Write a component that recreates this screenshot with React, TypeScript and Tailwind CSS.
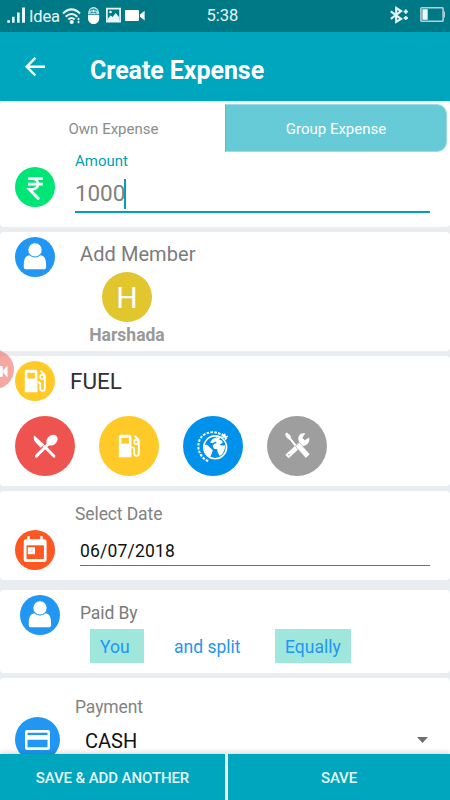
import type { ReactNode } from "react";

function StatusBar() {
  return (
    <div className="flex h-8 flex-shrink-0 items-center bg-[#007987] text-[#e8f6f7]">
      <svg className="ml-[7px] w-[19px]" height="32" viewBox="0 0 19 32" fill="currentColor">
        <path d="M0.3 20.2h2.7v2.6H.3zM5 16.7h2.6v6H5zM10 12.4h2.7v10.3H10zM15 7.4h3v15.3h-3z" />
      </svg>
      <span className="ml-[3px] w-[31px] pt-px text-[16.5px] leading-8 tracking-[-0.2px]">Idea</span>
      {/* Wifi */}
      <svg className="ml-0.5 w-[20px]" height="32" viewBox="0 0 20 32" fill="none" stroke="currentColor">
        <path d="M1 13.4Q9.5 5.2 18 13.4M3.7 16.8Q9.5 11.2 15.3 16.8M6.3 19.6Q9.5 16.4 12.7 19.6" strokeWidth="2.1" />
        <circle cx="9.7" cy="22" r="2.1" fill="currentColor" stroke="none" />
        <path d="M16.5 17.8v2.4M15.3 19h2.4M16.5 20.8v2.4M15.3 22h2.4" strokeWidth="1.1" />
      </svg>
      {/* Mouse */}
      <svg className="ml-[5px] w-[13px]" height="32" viewBox="0 0 13 32">
        <path d="M1 14.8h11.2v3.2c0 8-11.2 8-11.2 0z" fill="#fff" />
        <path d="M1 14c0-9.5 11.2-9.5 11.2 0z" fill="currentColor" opacity="0.8" />
        <path d="M3 10.4q3.4-3 7 0M3.4 13q3-2 6 0" stroke="#007987" strokeWidth="0.9" fill="none" />
        <circle cx="6.5" cy="11" r="1.5" fill="#fff" stroke="#007987" strokeWidth="0.5" />
      </svg>
      {/* Picture */}
      <svg className="ml-[6px] w-[15px]" height="32" viewBox="0 0 15 32">
        <path d="M.9 8.7h13.2v13H.9z" fill="#007987" stroke="currentColor" strokeWidth="1.7" />
        <circle cx="4.5" cy="12" r="1.3" fill="currentColor" />
        <path d="M2 18.5l2.6-3 2 1.6 3-4 3.4 3.9V21H2z" fill="currentColor" />
      </svg>
      {/* Video */}
      <svg className="ml-1 w-[20px]" height="32" viewBox="0 0 20 32" fill="#fff">
        <rect x="0" y="10" width="14" height="11" rx="1" />
        <path d="M15 14.6l4.6-3.8v9.6L15 16.7z" />
      </svg>
      <span className="ml-[61px] w-[33px] text-center text-[16.5px] leading-8">5:38</span>
      {/* Bluetooth */}
      <svg className="ml-[151px] w-[19px]" height="32" viewBox="0 0 19 32" fill="none" stroke="currentColor" strokeWidth="2.1">
        <path d="M.8 11.4l10.3 7.5-4.9 3V8l4.9 3.1L.8 18.9" />
        <path d="M15.8 9.6v4.2M13.7 11.7h4.2M15.8 15.9v4.2M13.7 18h4.2" strokeWidth="1.8" />
      </svg>
      {/* Battery */}
      <svg className="ml-[11px] w-[26px]" height="32" viewBox="0 0 26 32">
        <rect x=".9" y="7.7" width="22.2" height="13.6" rx=".8" fill="none" stroke="#b5cfd2" strokeWidth="1.6" />
        <rect x="2.4" y="9.2" width="5.3" height="10.6" fill="#eef7f8" />
        <path d="M23.8 11.5h1.2v6h-1.2z" fill="#b5cfd2" />
      </svg>
    </div>
  );
}

function Card({ className, children }: { className: string; children?: ReactNode }) {
  return <section className={`flex-shrink-0 rounded bg-white ${className}`}>{children}</section>;
}

function Disc({ className, children }: { className: string; children: ReactNode }) {
  return <div className={`flex flex-shrink-0 items-center justify-center rounded-full ${className}`}>{children}</div>;
}

function PersonIcon() {
  return (
    <svg width="40" height="40" viewBox="0 0 40 40" fill="#fff">
      <path d="M14.2 18.2C10.2 19 8.8 22.6 8.8 27.6v2.6c0 1.2 1 2.1 2.2 2.1h18c1.2 0 2.1-.9 2.1-2.1v-2.6c0-5-1.4-8.6-5.3-9.4-3.6 2.6-8 2.6-11.6 0z" />
      <circle cx="20" cy="12.9" r="7.1" stroke="#2196f3" strokeWidth="0.9" />
    </svg>
  );
}

function FuelIcon({ size }: { size: number }) {
  return (
    <svg width={size} height={size} viewBox="0 0 24 24">
      <path d="M3.8 .8h8.6c1.1 0 2 .9 2 2v20.4H1.8V2.8c0-1.1.9-2 2-2z" fill="#fff" />
      <path d="M4.4 3.8h7.5v5.8H4.4z" fill="#ffca28" />
      <path
        d="M14.4 13.4h1.2c1.2 0 1.6.7 1.6 1.8v4.4c0 3.2 4.6 3 4.6 0V7.2c0-.9-.4-1.6-1-2.2l-3.4-3.3"
        fill="none"
        stroke="#fff"
        strokeWidth="1.9"
      />
      <circle cx="19.2" cy="8" r="2.1" fill="#ffca28" stroke="#fff" strokeWidth="1.8" />
    </svg>
  );
}

function FoodIcon() {
  return (
    <svg width="60" height="60" viewBox="0 0 60 60">
      <path d="M21.3 40.1L34 27.4M29.5 30.5l9.4 9.6" stroke="#fff" strokeWidth="2.9" strokeLinecap="round" />
      <path d="M19 19.2q-1.3 4.4 2.6 8.3l4.2 4.3 3.4-3.4z" fill="#fff" />
      <ellipse cx="37" cy="24.2" rx="6.2" ry="4.8" transform="rotate(-40 37 24.2)" fill="#fff" />
    </svg>
  );
}

function TravelIcon() {
  return (
    <svg width="60" height="60" viewBox="0 0 60 60">
      <circle cx="32.2" cy="31.3" r="11.4" fill="none" stroke="#fff" strokeWidth="1.6" />
      <path
        d="M25.2 45C13.4 40.6 12.2 23.6 21.6 18.3c6.2-3.3 13.3-2.7 19 1.7"
        fill="none"
        stroke="#fff"
        strokeWidth="2"
        strokeDasharray="2.6 1.3"
      />
      <path d="M38.4 21.2l6.4-.8M41.6 17.6l1 6.4M39 17.8l4.7 5" stroke="#fff" strokeWidth="1.5" />
      {/* Europe, Africa and the Americas */}
      <path
        d="M27 26.6l2.5-3.5 4.2-1.9 3.4.3-.8 2.2 3 1 .3 2.3-2.9 1.3 1.5 1.1 4 .2-.5 3.6-2.2 4.8-2.8 2-2.1-3.8-.4-3-3.2-.5-1.3-2.6 1.5-2.4 2.7-.8-1.8-1.4-2.4 1.7z"
        fill="#fff"
      />
      <path d="M21.2 28.6l3.3.4 2.6 2.7 2.7 2.5-1.2 3.6-1.3 3.3c-3.7-2-6.9-6.7-6.1-12.5z" fill="#fff" />
    </svg>
  );
}

function ToolsIcon() {
  return (
    <svg width="60" height="60" viewBox="0 0 60 60">
      <path d="M20 18.6l9 11.5" stroke="#fff" strokeWidth="2" />
      <path d="M18 18l1.8-1.4 3.7 2.9.6 3.5-1.4 1-3.1-2.6z" fill="#fff" />
      <path d="M20 40.6L35.8 26" stroke="#fff" strokeWidth="4.8" />
      <path
        d="M42.2 21.6l-4.4 2.6-2.6-2.5 3.1-4.2c-4.4-1.5-8.3 2.4-6.7 7l2.3 5c4 1.7 9.4-1.6 8.3-7.9z"
        fill="#fff"
      />
      <path d="M28.3 30.2l4.2-3.6L43 38.2l-4.2 4z" fill="#fff" stroke="#9e9e9e" strokeWidth="0.6" />
      <circle cx="22" cy="38.8" r=".8" fill="#9e9e9e" />
    </svg>
  );
}

export default function App() {
  return (
    <main className="relative flex h-[800px] w-[450px] flex-col overflow-hidden bg-[#e9edf0] font-['Roboto',sans-serif]">
      <StatusBar />

      <header className="flex h-[69px] flex-shrink-0 items-center bg-[#00a6bd]">
        <svg className="ml-[25px]" width="20" height="20" viewBox="0 0 20 20" fill="none" stroke="#fff" strokeWidth="2.4">
          <path d="M20 9.7H2M10.3 .9L1.7 9.7l8.6 8.8" />
        </svg>
        <h1 className="ml-[45px] pt-[8px] text-[25px] leading-8 font-bold tracking-[-0.07px] text-white">
          Create Expense
        </h1>
      </header>

      {/* Expense type and amount */}
      <Card className="mt-px h-[125px] pt-[2px]">
        <div className="flex h-12 text-[15px] leading-[49px]">
          <div className="w-[225px] pt-px pl-0.5 text-center text-[#8b8b8b]">Own Expense</div>
          <div className="w-[222px] rounded-r-[10px] border border-[#9bdbe4] border-l-[#4fc3d1] bg-[#66cad7] text-center text-white">
            Group Expense
          </div>
        </div>
        <div className="flex pl-[15px]">
          <Disc className="mt-[15px] size-10 bg-[#00e676]">
            <svg width="40" height="40" viewBox="0 0 40 40" fill="none" stroke="#fff" strokeWidth="2.8">
              <path d="M13 11.7h14.8M13 17.2h14.8M13 11.7h4.3c7.5 0 7.5 10.6 0 10.6H14.4l9.6 9.9" />
            </svg>
          </Disc>
          <div className="ml-5 w-[355px] border-b-2 border-[#00a0b7] text-[#00a0b7]">
            <div className="text-[15px] leading-[18px]">Amount</div>
            <div className="flex h-[41px] items-center text-[22.5px] text-[#808080]">
              <span className="pt-[7px] tracking-[-0.1px]">1000</span>
              <span className="mt-[7px] -ml-px h-[30px] w-0.5 bg-[#00a0b7]" />
            </div>
          </div>
        </div>
      </Card>

      {/* Members */}
      <Card className="mt-[5px] flex h-[119px] pl-[15px]">
        <Disc className="mt-[5px] size-10 bg-[#2196f3]">
          <PersonIcon />
        </Disc>
        <div className="ml-[25px]">
          <div className="pt-[10px] text-xl leading-6 tracking-[0.08px] text-[#7b7b7b]">Add Member</div>
          <div className="flex w-[94px] flex-col items-center">
            <Disc className="mt-[6px] size-[50px] bg-[#e2c62e] text-[30px] text-white">H</Disc>
            <span className="mt-[3px] text-[17.5px] leading-5 font-bold text-[#999]">Harshada</span>
          </div>
        </div>
      </Card>

      {/* Category */}
      <Card className="mt-[5px] h-[130px] pt-[5px] pl-[15px]">
        <div className="flex items-center">
          <Disc className="size-10 bg-[#ffca28]">
            <FuelIcon size={24} />
          </Disc>
          <span className="ml-[15px] pt-[2px] text-[22.5px] text-[#303030]">FUEL</span>
        </div>
        <div className="mt-[15px] flex gap-6">
          <Disc className="size-[60px] bg-[#ef5350]">
            <FoodIcon />
          </Disc>
          <Disc className="size-[60px] bg-[#ffca28]">
            <FuelIcon size={24} />
          </Disc>
          <Disc className="size-[60px] bg-[#0091ea]">
            <TravelIcon />
          </Disc>
          <Disc className="size-[60px] bg-[#9e9e9e]">
            <ToolsIcon />
          </Disc>
        </div>
      </Card>

      {/* Date */}
      <Card className="mt-[5px] flex h-[89px] pl-[15px]">
        <Disc className="mt-[39px] size-10 bg-[#ff5722]">
          <svg width="40" height="40" viewBox="0 0 40 40">
            <path d="M12.2 6.2h2.6v3h10.4v-3h2.6v3h1.3c1.5 0 2.5 1 2.5 2.5v17.7c0 1.5-1 2.5-2.5 2.5H11.2c-1.5 0-2.5-1-2.5-2.5V11.7c0-1.5 1-2.5 2.5-2.5h1z" fill="#fff" />
            <path d="M11.5 15.3h17.4v13.7H11.5z" fill="#ff5722" />
            <path d="M12.8 17.2h7.2v7h-7.2z" fill="#fff" />
            <path d="M15.5 19.2h2.5v3h-2.5z" fill="#ffddd3" />
          </svg>
        </Disc>
        <div className="ml-5">
          <div className="pt-[13px] text-[17.5px] leading-5 tracking-[-0.1px] text-[#828282]">Select Date</div>
          <div className="ml-[5px] flex h-[42px] w-[350px] items-center border-b border-[#6f6f6f] pt-[13px] text-[17.5px] tracking-[0.2px] text-[#111]">
            06/07/2018
          </div>
        </div>
      </Card>

      {/* Split */}
      <Card className="mt-[10px] flex h-[83px] pl-5">
        <Disc className="mt-[5px] size-10 bg-[#2196f3]">
          <PersonIcon />
        </Disc>
        <div className="ml-5">
          <div className="pt-[13px] text-[17.5px] leading-5 tracking-[-0.1px] text-[#7b7b7b]">Paid By</div>
          <div className="mt-[6px] ml-[10px] flex text-[17.5px] leading-[36px] text-[#2196f3]">
            <span className="h-[34px] w-[54px] bg-[#9fe6dc] pl-[10px]">You</span>
            <span className="ml-[30px] w-[101px]">and split</span>
            <span className="h-[34px] w-[76px] bg-[#9fe6dc] pl-[10px]">Equally</span>
          </div>
        </div>
      </Card>

      {/* Payment */}
      <Card className="mt-[5px] flex h-[90px] pl-[15px]">
        <Disc className="mt-[39px] size-[45px] bg-[#2196f3]">
          <svg width="45" height="45" viewBox="0 0 45 45">
            <rect x="10" y="13" width="25" height="20" rx="2" fill="#fff" />
            <path d="M12.5 15.7h20v2.4h-20zM12.5 22.8h20v7.4h-20z" fill="#2196f3" />
          </svg>
        </Disc>
        <div className="ml-[15px]">
          <div className="pt-[19px] text-[17.5px] leading-5 tracking-[-0.1px] text-[#828282]">Payment</div>
          <div className="ml-[10px] flex w-[343px] items-center justify-between pt-[12px] text-xl leading-6 text-[#111]">
            CASH
            <svg className="-mt-0.5" width="11" height="6" viewBox="0 0 11 6" fill="#6f6f6f">
              <path d="M0 0h11L5.5 6z" />
            </svg>
          </div>
        </div>
      </Card>

      {/* Recorder bubble, half off screen */}
      <div className="absolute top-[350px] -left-[25px] flex size-[39px] items-center justify-end rounded-full bg-[#ee8379]/70">
        <svg className="mt-[3px] mr-[6px]" width="9" height="13" viewBox="0 0 9 13" fill="#fff">
          <path d="M0 1h2.2c1 0 1.6.6 1.6 1.6v7.8c0 1-.6 1.6-1.6 1.6H0zM4.4 5L8.5.8v11.6L4.4 8z" />
        </svg>
      </div>

      {/* Bottom actions */}
      <footer className="absolute inset-x-0 bottom-0 flex h-[46px] gap-[3px] bg-[#edf4f5] text-[15px] leading-[48px] font-medium tracking-[-0.1px] text-[#e6f7f9] shadow-[0_-2px_5px_rgba(0,0,0,0.14)]">
        <button className="w-[225px] bg-[#00a6bd] text-center">SAVE &amp; ADD ANOTHER</button>
        <button className="flex-1 bg-[#00a6bd] text-center">SAVE</button>
      </footer>
    </main>
  );
}
